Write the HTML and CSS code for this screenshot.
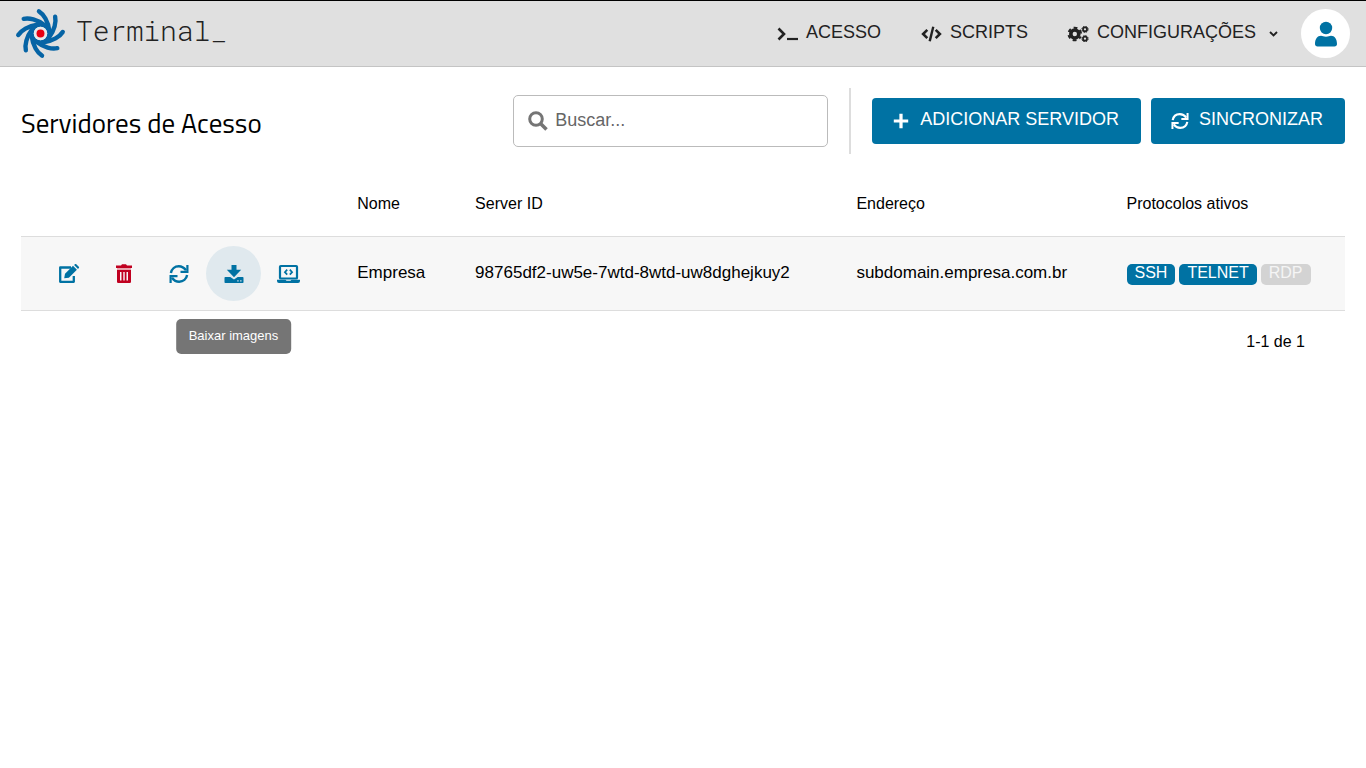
FILE: index.html
```html
<!DOCTYPE html>
<html lang="pt-BR">
<head>
<meta charset="utf-8">
<meta name="viewport" content="width=device-width, initial-scale=1">
<title>Servidores de Acesso</title>
<link rel="stylesheet" href="styles.css">
</head>
<body>
<svg class="defs" aria-hidden="true">
  <symbol id="sync" viewBox="0 0 20 20">
    <g fill="none" stroke="currentColor">
      <path d="M1.900 9C2.600 4.900 5.800 2.300 9.800 2.300c3.200 0 5.400 1.500 7.200 4" stroke-width="2.400"/>
      <path d="M18.400 1v6.900h-6.900" stroke-width="2.200"/>
      <path d="M18.100 11c-.7 4.100-3.900 6.700-7.900 6.700-3.200 0-5.400-1.500-7.200-4" stroke-width="2.400"/>
      <path d="M1.600 19v-6.900h6.900" stroke-width="2.200"/>
    </g>
  </symbol>
</svg>
<header class="topbar">
  <a class="brand" href="#">
    <svg class="logo" viewBox="-25 -25 50 50" aria-hidden="true">
      <defs><path id="arm" d="M-1.500-21.800C3-19 7.500-12 8.600-3"/></defs>
      <g fill="none" stroke="#0664a5" stroke-width="4.300" stroke-linecap="round">
        <use href="#arm"/><use href="#arm" transform="rotate(45)"/><use href="#arm" transform="rotate(90)"/><use href="#arm" transform="rotate(135)"/><use href="#arm" transform="rotate(180)"/><use href="#arm" transform="rotate(225)"/><use href="#arm" transform="rotate(270)"/><use href="#arm" transform="rotate(315)"/>
        <circle r="8.800" stroke-width="4.400"/>
      </g>
      <circle r="6.600" fill="#e6eaec"/><circle r="3.900" fill="#e60012"/>
    </svg>
    <span class="brand-name">Terminal_</span>
  </a>
  <nav class="nav">
    <a class="nav-item" href="#">
      <svg class="nav-icon" viewBox="0 0 22 16" aria-hidden="true"><path d="M2.500 2.500 8 8l-5.500 5.500" fill="none" stroke="currentColor" stroke-width="2.600"/><path d="M11 13h11" stroke="currentColor" stroke-width="2.200"/></svg>
      <span>ACESSO</span>
    </a>
    <a class="nav-item" href="#">
      <svg class="nav-icon" viewBox="0 0 22 16" aria-hidden="true"><path d="M7.300 3.800 3.100 8l4.200 4.200M15.700 3.800 19.900 8l-4.200 4.200" fill="none" stroke="currentColor" stroke-width="2.600"/><path d="M13.300.8 9.700 15.200" stroke="currentColor" stroke-width="2.400"/></svg>
      <span>SCRIPTS</span>
    </a>
    <a class="nav-item" href="#">
      <svg class="nav-icon" viewBox="0 0 22 16" aria-hidden="true">
        <g fill="none" stroke="currentColor">
          <circle cx="7.800" cy="8" r="4" stroke-width="3.600"/>
          <circle cx="7.800" cy="8" r="6.300" stroke-width="2" stroke-dasharray="3.600 2.997" stroke-dashoffset="1.800" transform="rotate(30 7.800 8)"/>
          <circle cx="18" cy="3.300" r="2" stroke-width="1.700"/>
          <circle cx="18" cy="3.300" r="3.100" stroke-width="1" stroke-dasharray="1.500 .935"/>
          <circle cx="18" cy="12.700" r="2" stroke-width="1.700"/>
          <circle cx="18" cy="12.700" r="3.100" stroke-width="1" stroke-dasharray="1.500 .935"/>
        </g>
      </svg>
      <span>CONFIGURAÇÕES</span>
      <svg class="chevron" viewBox="0 0 9 6" aria-hidden="true"><path d="m1 1 3.500 3.500L8 1" fill="none" stroke="currentColor" stroke-width="1.900"/></svg>
    </a>
    <button class="avatar" type="button" aria-label="Conta">
      <svg viewBox="0 0 22 26" width="22" height="26" aria-hidden="true"><circle cx="11" cy="7" r="6.200" fill="currentColor"/><path d="M0 23c0-5 2.400-8.200 6-8.200 1.600 0 2.500 1 5 1s3.400-1 5-1c3.600 0 6 3.200 6 8.200 0 1.300-1 2.500-2.500 2.500h-17C1 25.500 0 24.300 0 23z" fill="currentColor"/></svg>
    </button>
  </nav>
</header>
<main class="page">
  <div class="toolbar">
    <h1 class="title">Servidores de Acesso</h1>
    <label class="search">
      <svg viewBox="0 0 20 20" width="20" height="20" aria-hidden="true"><circle cx="8" cy="8" r="6.300" fill="none" stroke="currentColor" stroke-width="3"/><path d="m12.500 12.500 6 6" stroke="currentColor" stroke-width="3.600"/></svg>
      <input class="search-input" type="text" placeholder="Buscar..." aria-label="Buscar">
    </label>
    <div class="buttons">
      <button class="primary" type="button">
        <svg viewBox="0 0 20 20" width="18" height="18" aria-hidden="true"><path d="M10 2v16M2 10h16" stroke="currentColor" stroke-width="3.600"/></svg>
        <span>ADICIONAR SERVIDOR</span>
      </button>
      <button class="primary" type="button">
        <svg width="18" height="18" aria-hidden="true"><use href="#sync"/></svg>
        <span>SINCRONIZAR</span>
      </button>
    </div>
  </div>
  <table class="servers">
    <colgroup><col class="col-actions"><col class="col-name"><col class="col-id"><col class="col-address"><col></colgroup>
    <thead>
      <tr><td></td><th scope="col">Nome</th><th scope="col">Server ID</th><th scope="col">Endereço</th><th scope="col">Protocolos ativos</th></tr>
    </thead>
    <tbody>
      <tr>
        <td>
          <div class="actions">
            <button class="action" type="button" aria-label="Editar"><svg viewBox="0 0 22 20" width="22" height="20" aria-hidden="true"><path d="M13 3.500H2.200v14.300h13.600V12" fill="none" stroke="currentColor" stroke-width="2.300" stroke-linejoin="round"/><path d="m6.200 14.300.8-4.500 8-8 3.900 3.900-8 8zM16.100 1l.8-.8q.7-.5 1.400 0l2.500 2.500q.6.700 0 1.400l-.8.800z" fill="currentColor"/></svg></button>
            <button class="action danger" type="button" aria-label="Excluir"><svg viewBox="0 0 16 20" width="16" height="20" aria-hidden="true"><path d="M0 1.500h5L6 .3h4l1 1.200h5V4H0z" fill="currentColor"/><path d="M1 4h14v2H1z" fill="#e9a3ad"/><path fill-rule="evenodd" d="M1 6h14v11.800q0 1.200-1.200 1.200H2.200Q1 19 1 17.800zM4 8v8.500h1.500V8zm3.300 0v8.500h1.400V8zm3.200 0v8.500H12V8z" fill="currentColor"/></svg></button>
            <button class="action" type="button" aria-label="Sincronizar"><svg width="20" height="20" aria-hidden="true"><use href="#sync"/></svg></button>
            <button class="action active" type="button" aria-describedby="tip"><svg viewBox="0 0 20 20" width="20" height="20" aria-hidden="true"><path d="M7.500 1h5v4.800h4.700L10 13.200 2.800 5.800h4.700z" fill="currentColor"/><path fill-rule="evenodd" d="M1.300 13h5L10 15.600l3.700-2.600h5q.8 0 .8.800v4.400q0 .8-.8.800H1.300q-.8 0-.8-.8v-4.400q0-.8.8-.8zm12 3.200v1.300h1.300v-1.300zm2.900 0v1.300h1.300v-1.300z" fill="currentColor"/></svg><span class="tooltip" id="tip" role="tooltip">Baixar imagens</span></button>
            <button class="action" type="button" aria-label="Console"><svg viewBox="0 0 24 20" width="24" height="20" aria-hidden="true"><rect x="3" y="2" width="17" height="12.500" rx=".8" fill="none" stroke="currentColor" stroke-width="2.200"/><path d="M10.200 5.700 7.900 8.200l2.300 2.500M12.800 5.700l2.300 2.500-2.300 2.500" fill="none" stroke="currentColor" stroke-width="1.700"/><path d="M0 15.800h8.500l1 1h4l1-1H23v1.200q0 2-2 2H2q-2 0-2-2z" fill="currentColor"/></svg></button>
          </div>
        </td>
        <td>Empresa</td>
        <td>98765df2-uw5e-7wtd-8wtd-uw8dghejkuy2</td>
        <td>subdomain.empresa.com.br</td>
        <td><div class="tags"><span class="tag">SSH</span><span class="tag">TELNET</span><span class="tag off">RDP</span></div></td>
      </tr>
    </tbody>
  </table>
  <p class="pager">1-1 de 1</p>
</main>
</body>
</html>
```
FILE: styles.css
```css
* { box-sizing: border-box; }
body {
  margin: 0;
  background: #fff;
  color: #000;
  font-family: "Liberation Sans", Arial, sans-serif;
  font-size: 16px;
}
button { font: inherit; border: 0; padding: 0; cursor: pointer; }
a { color: inherit; text-decoration: none; }
svg { flex: none; }
.defs { display: none; }

.topbar {
  display: flex;
  align-items: center;
  justify-content: space-between;
  height: 67px;
  padding: 0 16px 0 15px;
  border-top: 1px solid #000;
  border-bottom: 1px solid #c4c4c4;
  background: #e0e0e0;
  color: #222;
}
.brand { display: flex; align-items: center; gap: 10px; }
.logo { width: 51px; height: 51px; }
.brand-name {
  font-family: "Roboto Mono", "Liberation Mono", monospace;
  font-size: 28px;
  font-weight: 300;
  padding-bottom: 6px;
}
.nav { display: flex; align-items: center; gap: 39px; font-size: 18px; }
.nav-item { display: flex; align-items: center; gap: 8px; }
.nav-item span { padding-bottom: 3px; }
.nav-icon { width: 22px; height: 16px; }
.chevron { width: 9px; height: 6px; margin-left: 5px; }
.avatar {
  display: grid;
  place-items: center;
  width: 49px;
  height: 49px;
  margin-left: -16px;
  border-radius: 50%;
  background: #fff;
  color: #0072a3;
}

.page { padding: 21px; }
.toolbar { display: flex; align-items: center; height: 66px; }
.title {
  flex: 1;
  margin: 0;
  padding-top: 2px;
  font-family: "Titillium Web", "Open Sans", sans-serif;
  font-size: 27px;
  font-weight: 400;
}
.search {
  display: flex;
  align-items: center;
  gap: 7px;
  width: 315px;
  height: 52px;
  margin-right: 21px;
  padding: 0 14px;
  border: 1px solid #bbb;
  border-radius: 5px;
  color: #757575;
}
.search-input {
  flex: 1;
  min-width: 0;
  padding: 0 0 2px;
  border: 0;
  outline: 0;
  background: none;
  font: inherit;
  font-size: 18px;
}
.search-input::placeholder { color: #666; opacity: 1; }
.buttons {
  display: flex;
  align-items: center;
  gap: 10px;
  height: 66px;
  padding-left: 21px;
  border-left: 2px solid #ddd;
}
.primary {
  display: flex;
  align-items: center;
  gap: 10px;
  height: 46px;
  padding: 0 22px 0 20px;
  border-radius: 4px;
  background: #0072a3;
  color: #fff;
  font-size: 18px;
}
.primary span { padding-bottom: 4px; }

.servers {
  width: 100%;
  margin-top: 16px;
  border-collapse: collapse;
  table-layout: fixed;
}
.col-actions { width: 25.4%; }
.col-name { width: 8.9%; }
.col-id { width: 28.8%; }
.col-address { width: 20.4%; }
.servers th, .servers td { padding: 0; text-align: left; }
.servers th { height: 66px; padding-top: 2px; font-weight: 400; }
.servers tbody tr {
  height: 74px;
  border-top: 1px solid #ddd;
  border-bottom: 1px solid #ddd;
  background: #f7f7f7;
}
.servers tbody td { font-size: 17px; }
.actions { display: flex; padding-left: 20px; }
.action {
  position: relative;
  display: grid;
  place-items: center;
  width: 55px;
  height: 55px;
  padding-top: 2px;
  border-radius: 50%;
  background: none;
  color: #0072a3;
}
.danger { color: #c00020; }
.active { background: #e0e9ee; }
.tooltip {
  position: absolute;
  top: 73px;
  left: 50%;
  transform: translateX(-50%);
  height: 35px;
  padding: 0 13px;
  border-radius: 5px;
  background: #757575;
  color: #fff;
  font-size: 13px;
  line-height: 34px;
  white-space: nowrap;
}
.tags { display: flex; gap: 4px; padding-top: 2px; }
.tag {
  height: 21px;
  padding: 0 8px;
  border-radius: 5px;
  background: #0072a3;
  color: #fff;
  font-size: 16px;
  line-height: 18px;
}
.off { background: #d3d3d3; color: #f5f5f5; }
.pager { margin: 22px 40px 0; text-align: right; }
```
